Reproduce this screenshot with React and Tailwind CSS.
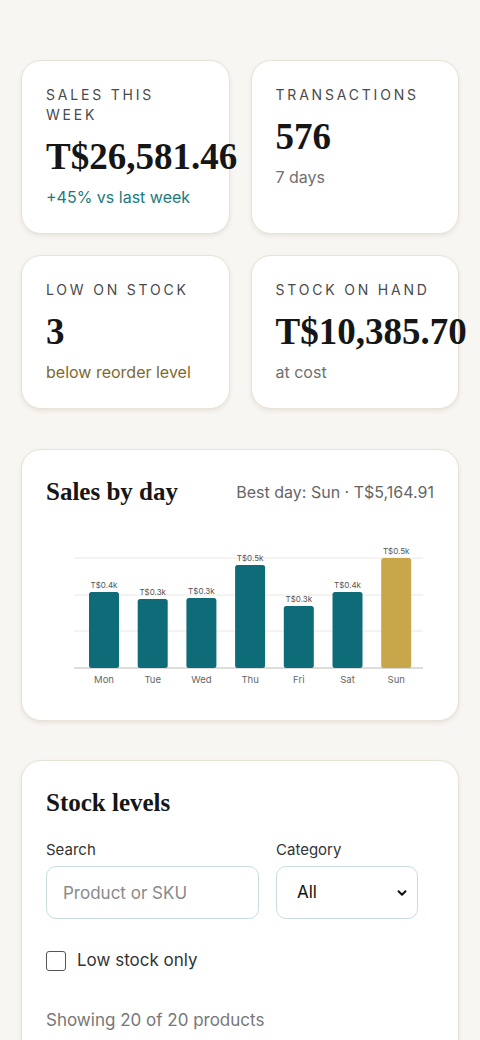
const stats = [
  { label: 'Sales this week', value: 'T$26,581.46', sub: '+45% vs last week', subColor: 'text-[#1d7a7c]' },
  { label: 'Transactions', value: '576', sub: '7 days', subColor: 'text-[#6f6f6f]' },
  { label: 'Low on stock', value: '3', sub: 'below reorder level', subColor: 'text-[#7d6a2e]' },
  { label: 'Stock on hand', value: 'T$10,385.70', sub: 'at cost', subColor: 'text-[#6f6f6f]' },
];

const days = [
  { day: 'Mon', top: 66, label: 'T$0.4k' },
  { day: 'Tue', top: 73, label: 'T$0.3k' },
  { day: 'Wed', top: 72, label: 'T$0.3k' },
  { day: 'Thu', top: 39, label: 'T$0.5k' },
  { day: 'Fri', top: 80, label: 'T$0.3k' },
  { day: 'Sat', top: 66, label: 'T$0.4k' },
  { day: 'Sun', top: 32, label: 'T$0.5k', best: true },
];

const serif = "font-['Liberation_Serif',serif]";

function StatCard({ s }) {
  return (
    <div className="bg-white rounded-[20px] border border-[#e9e2d6] shadow-[0_2px_4px_rgba(120,100,70,0.12)] p-6 min-w-0">
      <div className="text-[14px] leading-5 uppercase tracking-[0.2em] text-[#4a4a4a]">{s.label}</div>
      <div className={`${serif} mt-3 text-[37px] leading-10 font-bold text-[#161616] whitespace-nowrap`}>{s.value}</div>
      <div className={`mt-2 text-[16px] leading-6 ${s.subColor}`}>{s.sub}</div>
    </div>
  );
}

function Chart() {
  const base = 142;
  return (
    <svg viewBox="0 0 391 170" width="391" height="170" className="block mt-4">
      {[32, 69, 105].map((y) => (
        <line key={y} x1="28" x2="377" y1={y} y2={y} stroke="#ece8e0" strokeWidth="1" />
      ))}
      <line x1="28" x2="377" y1={base} y2={base} stroke="#bdbab4" strokeWidth="1" />
      {days.map((d, i) => {
        const x = 43 + i * 48.7;
        return (
          <g key={d.day}>
            <rect x={x} y={d.top} width="30" height={base - d.top} rx="2.5" fill={d.best ? '#c8a74b' : '#0e6c78'} />
            <text x={x + 15} y={d.top - 4} textAnchor="middle" fontSize="8" fill="#555" fontFamily="Inter, sans-serif">{d.label}</text>
            <text x={x + 15} y={base + 15} textAnchor="middle" fontSize="9.5" fill="#666" fontFamily="Inter, sans-serif">{d.day}</text>
          </g>
        );
      })}
    </svg>
  );
}

export default function App() {
  return (
    <div className="min-h-[1040px] bg-[#f8f6f2] px-[21px] pt-[60px] pb-10 font-['Inter',sans-serif] text-[#222]">
      <div className="grid grid-cols-2 gap-x-[21px] gap-y-[21px]">
        {stats.map((s) => <StatCard key={s.label} s={s} />)}
      </div>

      <div className="mt-[40px] bg-white rounded-[20px] border border-[#e9e2d6] shadow-[0_2px_4px_rgba(120,100,70,0.12)] px-6 pt-6 pb-6">
        <div className="flex items-center justify-between">
          <h2 className={`${serif} text-[25px] leading-9 font-bold text-[#161616]`}>Sales by day</h2>
          <span className="text-[16px] text-[#666]">Best day: Sun · T$5,164.91</span>
        </div>
        <Chart />
      </div>

      <div className="mt-[39px] bg-white rounded-[20px] border border-[#e9e2d6] shadow-[0_2px_4px_rgba(120,100,70,0.12)] px-6 pt-6 pb-6">
        <h2 className={`${serif} text-[25px] leading-9 font-bold text-[#161616]`}>Stock levels</h2>
        <div className="mt-[19px] flex gap-[17px]">
          <div className="w-[213px]">
            <label className="block text-[15px] leading-5 text-[#333]">Search</label>
            <input placeholder="Product or SKU" className="mt-1.5 w-full h-[53px] rounded-[10px] border border-[#c9dde0] px-4 text-[17px] placeholder:text-[#8a8a8a] outline-none" />
          </div>
          <div className="w-[142px]">
            <label className="block text-[15px] leading-5 text-[#333]">Category</label>
            <div className="relative mt-1.5">
              <select className="w-full h-[53px] appearance-none rounded-[10px] border border-[#c9dde0] bg-white px-5 text-[17px] text-[#111] outline-none">
                <option>All</option>
              </select>
              <svg className="absolute right-[10px] top-1/2 -translate-y-1/2 pointer-events-none" width="12" height="12" viewBox="0 0 12 12">
                <path d="M2.5 4.2 6 7.7l3.5-3.5" fill="none" stroke="#111" strokeWidth="2" strokeLinecap="round" strokeLinejoin="round" />
              </svg>
            </div>
          </div>
        </div>
        <label className="mt-[29px] flex items-center gap-[11px]">
          <span className="w-5 h-5 rounded-[3px] border-[1.5px] border-[#555] bg-white"></span>
          <span className="text-[17px] text-[#333]">Low stock only</span>
        </label>
        <div className="mt-[34px] text-[17px] text-[#777]">Showing 20 of 20 products</div>
        <div className="h-40"></div>
      </div>
    </div>
  );
}
